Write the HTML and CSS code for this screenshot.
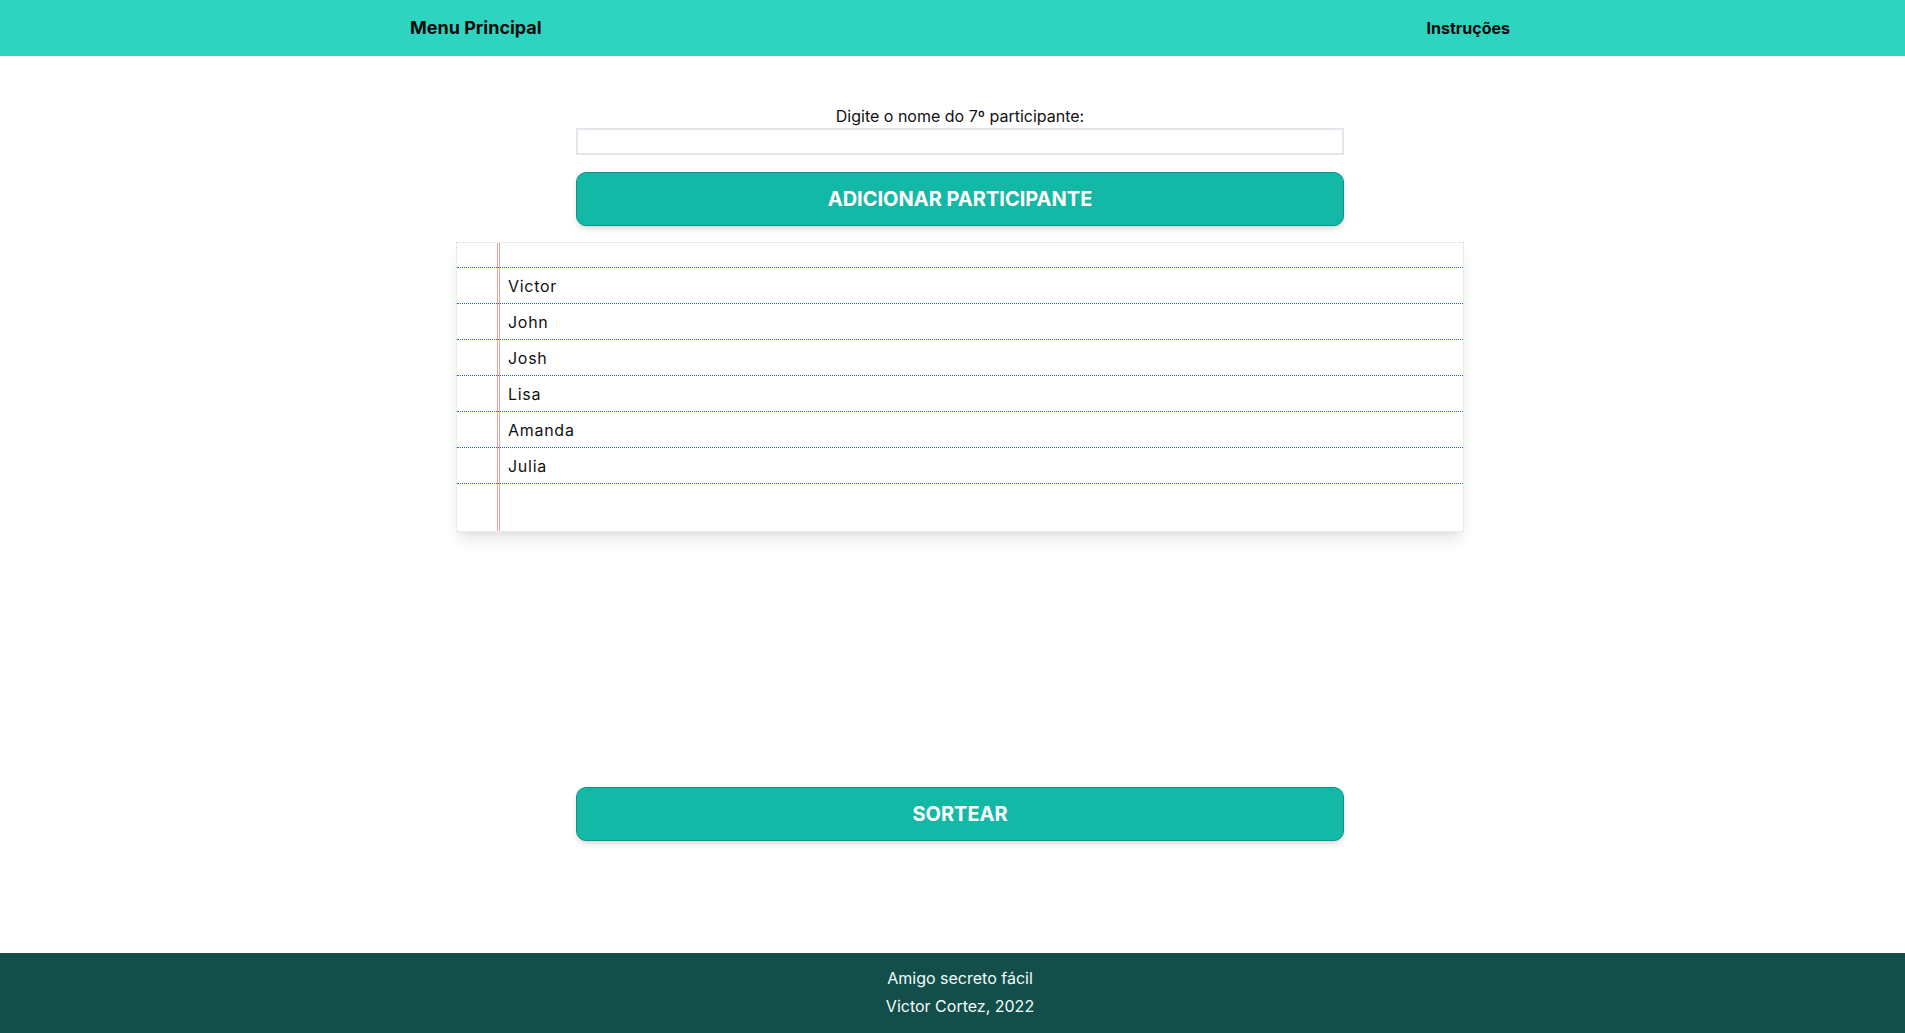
FILE: index.html
```html
<!DOCTYPE html>
<html lang="pt-BR">
<head>
<meta charset="utf-8">
<title>Amigo secreto fácil</title>
<link rel="stylesheet" href="styles.css">
</head>
<body>
<header class="topbar">
  <a class="nav-main" href="#">Menu Principal</a>
  <a class="nav-help" href="#">Instruções</a>
</header>
<main class="main">
  <form class="add-form">
    <label class="add-label" for="nome">Digite o nome do 7º participante:</label>
    <input class="add-input" id="nome" type="text">
    <button class="btn" type="button">ADICIONAR PARTICIPANTE</button>
  </form>
  <div class="notebook">
    <ul class="names">
      <li>Victor</li>
      <li>John</li>
      <li>Josh</li>
      <li>Lisa</li>
      <li>Amanda</li>
      <li>Julia</li>
    </ul>
  </div>
  <div class="draw">
    <button class="btn" type="button">SORTEAR</button>
  </div>
</main>
<footer class="footer">
  <p>Amigo secreto fácil</p>
  <p>Victor Cortez, 2022</p>
</footer>
</body>
</html>
```

FILE: styles.css
```css
body {
  margin: 0;
  min-height: 100vh;
  display: flex;
  flex-direction: column;
  font-family: "Inter", "Liberation Sans", sans-serif;
  color: #111;
  background: #fff;
}
.topbar {
  height: 56px;
  background: #2dd4bf;
  display: flex;
  align-items: center;
  justify-content: space-between;
  padding: 0 395px 2px 410px;
  box-sizing: border-box;
}
.topbar a {
  color: #0a0a0a;
  text-decoration: none;
  font-weight: 700;
}
.nav-main {
  font-size: 18px;
}
.nav-help {
  font-size: 16px;
  margin-top: 1px;
}
.main {
  flex: 1;
  display: flex;
  flex-direction: column;
  align-items: center;
  padding-left: 15px;
}
.add-form {
  width: 768px;
  margin-top: 48px;
  display: flex;
  flex-direction: column;
  align-items: center;
}
.add-label {
  font-size: 16px;
  line-height: 24px;
}
.add-input {
  width: 100%;
  height: 27px;
  box-sizing: border-box;
  border: 2px solid #e5e5ec;
  margin: 0;
  font: inherit;
}
.btn {
  width: 768px;
  height: 54px;
  margin-top: 17px;
  background: #14b8a6;
  border: 1px solid #0d9488;
  border-radius: 10px;
  color: #fff;
  font-family: "Inter", "Liberation Sans", sans-serif;
  font-size: 20px;
  font-weight: 700;
  box-shadow: 0 4px 6px -1px rgba(0,0,0,0.12), 0 2px 4px -2px rgba(0,0,0,0.1);
  cursor: pointer;
}
.notebook {
  width: 1008px;
  box-sizing: border-box;
  margin-top: 16px;
  border: 1px dotted #d6d6d6;
  padding: 24px 0 47px;
  background:
    linear-gradient(to right,
      transparent 40px, #f2a49c 40px, #f2a49c 41px,
      transparent 41px, transparent 42px,
      #f2a49c 42px, #f2a49c 43px, transparent 43px);
  box-shadow: 0 10px 15px -3px rgba(0,0,0,0.1), 0 4px 6px -4px rgba(0,0,0,0.08);
}
.names {
  list-style: none;
  margin: 0;
  padding: 0;
  border-top: 1px dotted #2558e8;
}
.names li {
  height: 34px;
  padding-top: 1px;
  line-height: 35px;
  border-bottom: 1px dotted #2558e8;
  padding-left: 51px;
  font-size: 16px;
  letter-spacing: 0.045em;
  color: #111;
}
.draw {
  margin-top: 238px;
}
.footer {
  background: #134e4a;
  color: #f0fdfa;
  text-align: center;
  padding: 11px 0 13px 15px;
  font-size: 16px;
  line-height: 28px;
}
.footer p {
  margin: 0;
}
```
